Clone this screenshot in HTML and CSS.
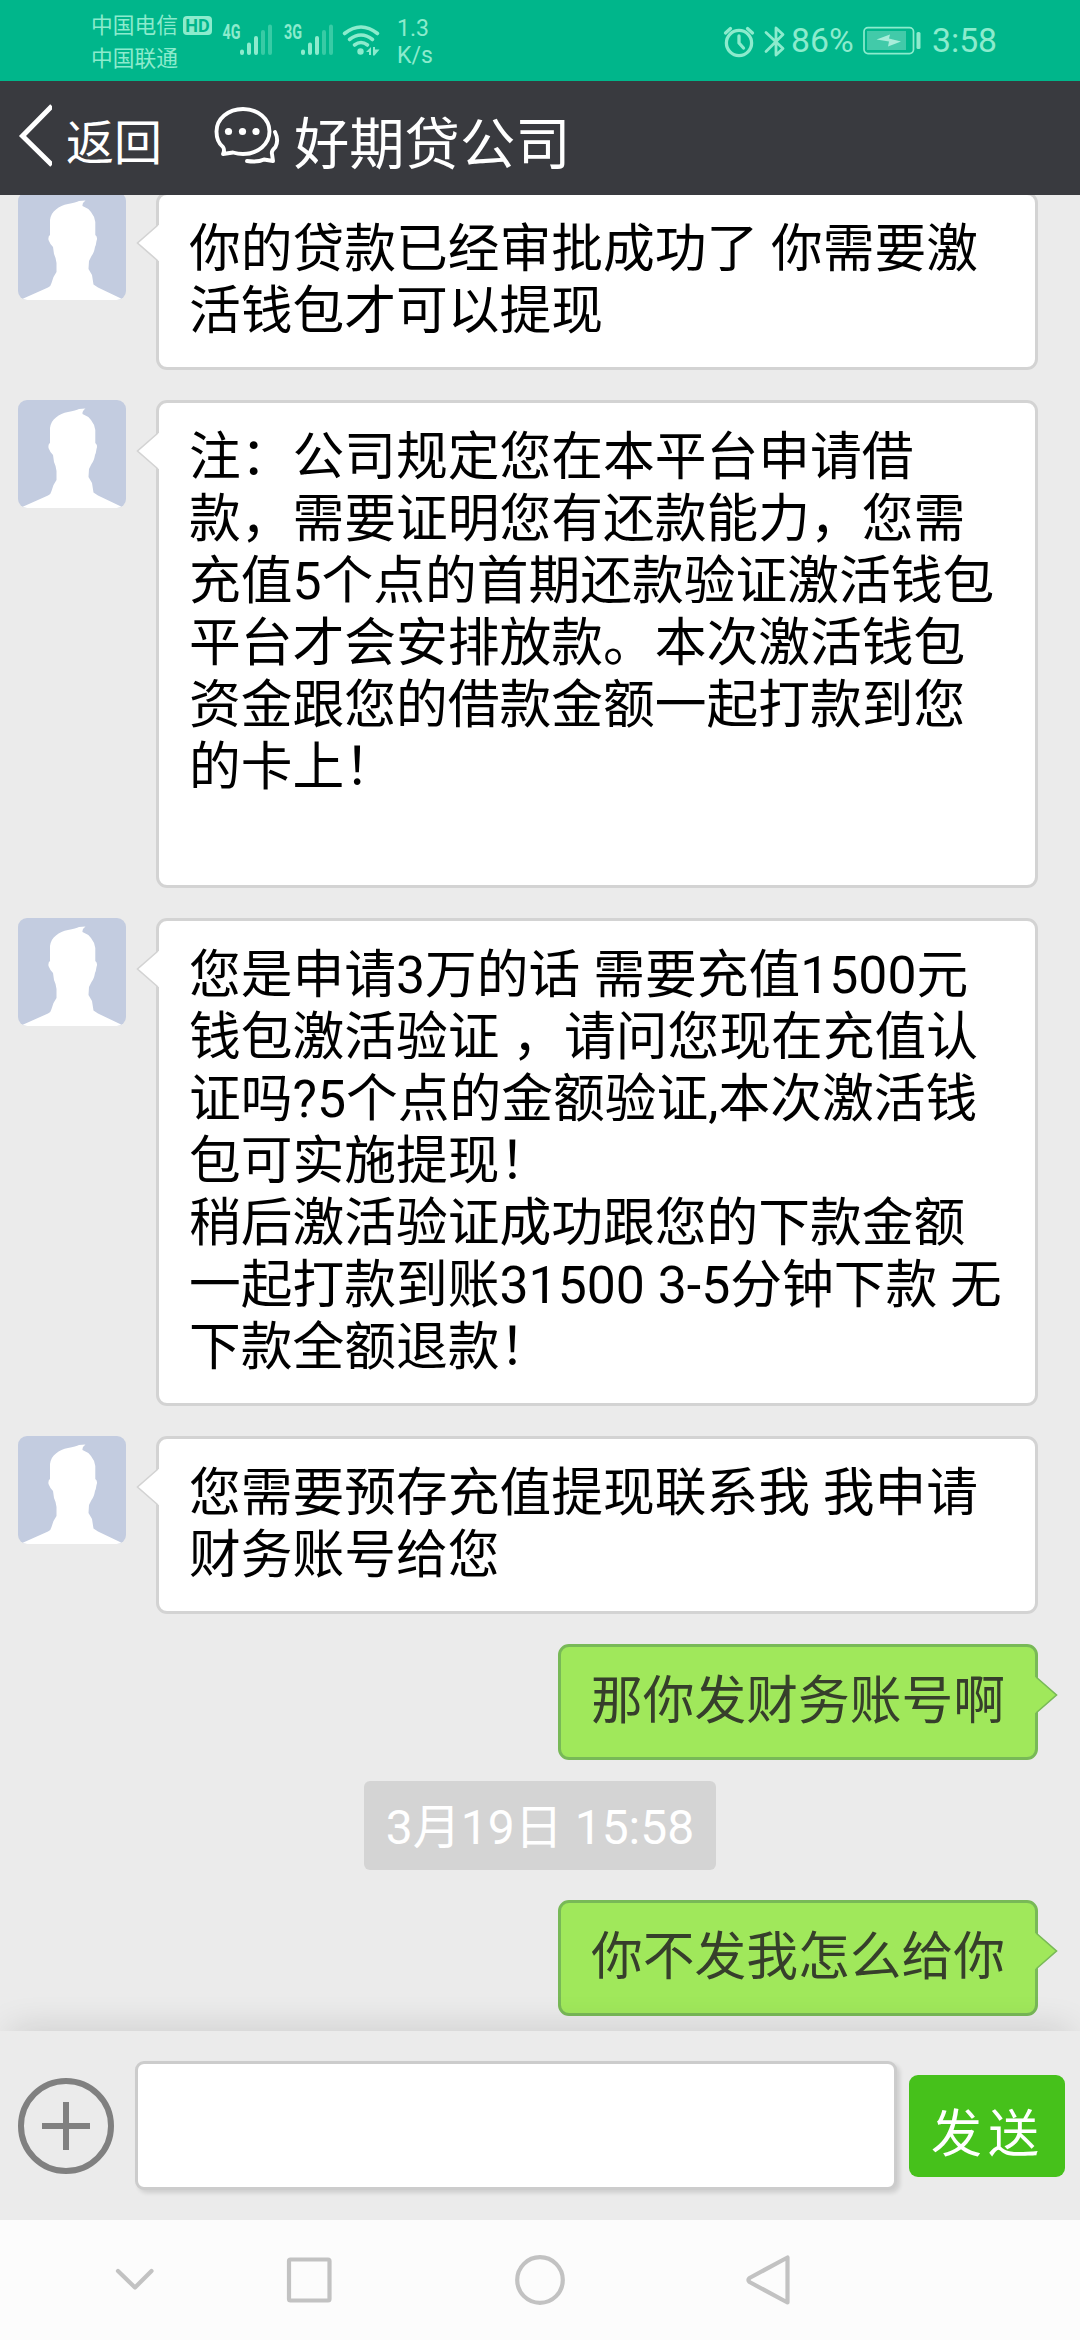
FILE: index.html
```html
<!DOCTYPE html>
<html lang="zh-CN">
<head>
<meta charset="utf-8">
<title>好期贷公司</title>
<link rel="stylesheet" href="styles.css">
</head>
<body>
<svg class="defs" aria-hidden="true">
  <symbol id="person" viewBox="0 0 108 108">
    <path fill="#fff" d="M3 108L5.3 106.5L30 95.5Q33 94 33.5 91L35.500 85L38.500 80V71Q38 66 36 62L35 55Q32 52 30.500 48Q30 44 32 43V28Q33 21 38 17.500Q43 13 50 12Q58 10.500 61 9L67.500 8.500Q64 11 64.500 14Q70 16 73 20Q77 25 77.300 30V43Q80 45 78.500 49Q78 53 77 55Q76 61 73.500 64L71 69L70.500 77L74 83L75.500 92.500L80 95.500L102 106L105 108Z"/>
  </symbol>
  <symbol id="tail-left" viewBox="0 0 24 38">
    <path class="tail-fill" d="M24 1H22L1.500 19L22 37H24Z"/>
    <path class="tail-line" d="M22 1L1.500 19L22 37"/>
  </symbol>
</svg>
<div class="screen">
  <header class="status">
    <div class="carriers">
      <div class="carrier">中国电信<span class="hd">HD</span></div>
      <div class="carrier">中国联通</div>
    </div>
    <svg class="signals" viewBox="220 18 164 44" width="164" height="44">
      <g class="net"><text x="222.500" y="39" textLength="18" lengthAdjust="spacingAndGlyphs">4G</text><text x="284" y="39" textLength="18" lengthAdjust="spacingAndGlyphs">3G</text></g>
      <g class="bars"><path d="M242 51.500V53M249 44.500V53M256 38V53M303 51.500V53M310 44.500V53M317 38V53"/><path opacity=".4" d="M263 32V53M270 26.500V53M324 32V53M331 26.500V53"/></g>
      <g class="wifi"><path d="M344.500 33.500Q361 20.500 377.500 33.500M349.500 39.500Q361 30.500 372.500 39.500M354.500 45Q361 40 367.500 45"/></g>
      <g fill="#8cebcd"><circle cx="360.500" cy="51.500" r="3.200"/><path d="M366 52L371 47V55H369V52ZM373 47H375V49.500H379.500L374.500 55.500H373Z"/></g>
    </svg>
    <div class="speed"><span>1.3</span><span>K/s</span></div>
    <div class="status-right">
      <svg class="line-icon" width="32" height="34" viewBox="0 0 32 34" stroke-width="3.300"><circle cx="16" cy="19" r="12.600"/><path d="M2.500 9L7.500 4.500M24.500 4.500L29.500 9M16 12V19L20.500 24"/></svg>
      <svg class="line-icon bt" width="22" height="34" viewBox="0 0 22 34" stroke-width="2.800"><path d="M2 8.500L19 24.500L12 31V4L19 10.500L2 27.500"/></svg>
      <span class="pct">86%</span>
      <svg class="battery" width="60" height="30" viewBox="0 0 60 30"><rect x="1" y="1.600" width="49.500" height="26" rx="4" fill="none" stroke="#8cebcd" stroke-width="1.700"/><rect x="4" y="5" width="39" height="19" fill="#42caa9"/><path d="M13.500 13.500L27 8.500L26 12.500L38 15.500L25 20.500L26 15.500Z" fill="#a8edda"/><rect x="53.500" y="6" width="4" height="17" rx="1.500" fill="#8cebcd"/></svg>
      <span class="clock">3:58</span>
    </div>
  </header>
  <nav class="topbar">
    <svg class="back" width="34" height="64" viewBox="18 103 34 64"><path d="M52 106L22.500 136L52 165" fill="none" stroke="#fff" stroke-width="5"/></svg>
    <span class="back-label">返回</span>
    <svg class="chat-icon" width="68" height="60" viewBox="212 105 68 60"><g fill="none" stroke="#fff" stroke-width="3.900" stroke-linejoin="round" stroke-linecap="round"><path d="M222 154Q224 150 222 147C217 143 215.500 137 215.500 131.500C215.500 119 227 109 242 109S268.500 119 268.500 131.500S257 154 242 154Q237 154 232 152.500Z"/><path d="M274 132Q278 140 274.500 147Q270 151 271 154L272 161L263 159.500Q257 162.500 246 161"/></g><g fill="#fff"><circle cx="227.500" cy="131.500" r="3.600"/><circle cx="241.500" cy="131.500" r="3.600"/><circle cx="255" cy="131.500" r="3.600"/></g></svg>
    <h1 class="title">好期贷公司</h1>
  </nav>
  <main class="chat">
    <div class="row"><svg class="avatar"><use href="#person"/></svg>
      <div class="bubble">你的贷款已经审批成功了 你需要激<br>活钱包才可以提现<svg class="tail"><use href="#tail-left"/></svg></div></div>
    <div class="row"><svg class="avatar"><use href="#person"/></svg>
      <div class="bubble">注：公司规定您在本平台申请借<br>款，需要证明您有还款能力，您需<br>充值5个点的首期还款验证激活钱包<br>平台才会安排放款。本次激活钱包<br>资金跟您的借款金额一起打款到您<br>的卡上！<br>&nbsp;<svg class="tail"><use href="#tail-left"/></svg></div></div>
    <div class="row"><svg class="avatar"><use href="#person"/></svg>
      <div class="bubble">您是申请3万的话 需要充值1500元<br>钱包激活验证 ，请问您现在充值认<br>证吗?5个点的金额验证,本次激活钱<br>包可实施提现！<br>稍后激活验证成功跟您的下款金额<br>一起打款到账31500 3-5分钟下款 无<br>下款全额退款！<svg class="tail"><use href="#tail-left"/></svg></div></div>
    <div class="row"><svg class="avatar"><use href="#person"/></svg>
      <div class="bubble">您需要预存充值提现联系我 我申请<br>财务账号给您<svg class="tail"><use href="#tail-left"/></svg></div></div>
    <div class="row mine"><div class="bubble">那你发财务账号啊<svg class="tail"><use href="#tail-left"/></svg></div></div>
    <time class="stamp">3月19日 15:58</time>
    <div class="row mine"><div class="bubble">你不发我怎么给你<svg class="tail"><use href="#tail-left"/></svg></div></div>
    <div class="fade"></div>
  </main>
  <footer class="composer">
    <svg width="96" height="96" viewBox="0 0 96 96" fill="none" stroke="#808080" stroke-width="6"><circle cx="48" cy="48" r="45"/><path d="M24 48H72M48 24V72"/></svg>
    <div class="input"></div>
    <button class="send">发送</button>
  </footer>
  <div class="sysnav">
    <svg width="1080" height="120" viewBox="0 0 1080 120" fill="none" stroke="#c2c2c2" stroke-width="4.200" stroke-linecap="round" stroke-linejoin="round"><path d="M118 51L135 67.500L151.500 51"/><rect x="289" y="39.500" width="40.500" height="41" rx="1.500"/><circle cx="540" cy="60" r="22.800"/><path d="M787.500 37.500V82.500L749.500 62Q747.500 60 749.500 58Z"/></svg>
  </div>
</div>
</body>
</html>
```
FILE: styles.css
```css
* { box-sizing: border-box; }
body { margin: 0; font-family: Roboto, "Noto Sans CJK SC", sans-serif; text-spacing-trim: space-all; }
.defs { position: absolute; width: 0; height: 0; }
.screen { width: 1080px; height: 2340px; display: flex; flex-direction: column; overflow: hidden; background: #ebebeb; }

.status { height: 81px; flex: none; display: flex; align-items: flex-start; background: #00b68b; color: #8cebcd; padding-left: 91px; }
.carriers { width: 129px; padding-top: 9px; font-size: 21.750px; line-height: 33px; }
.carrier { display: flex; align-items: center; white-space: nowrap; }
.hd { margin-left: 5px; width: 29px; height: 19px; border-radius: 4px; background: #8cebcd; color: #00b68b; font-size: 18px; font-weight: 700; line-height: 20px; text-align: center; }
.signals { margin-top: 18px; }
.net { font: 700 19.500px Roboto, sans-serif; fill: #8cebcd; }
.bars { fill: none; stroke: #8cebcd; stroke-width: 4; stroke-linecap: round; }
.wifi { fill: none; stroke: #8cebcd; stroke-width: 3.600; stroke-linecap: round; }
.speed { margin-left: 13px; padding-top: 15px; width: 60px; display: flex; flex-direction: column; font-size: 23px; line-height: 27px; }
.status-right { margin-left: 266px; display: flex; align-items: center; height: 81px; font-size: 33.750px; }
.line-icon { fill: none; stroke: #8cebcd; stroke-linecap: round; stroke-linejoin: round; }
.bt { margin-left: 9px; }
.pct { margin-left: 5px; width: 72px; }
.clock { margin-left: 9px; }

.topbar { height: 114px; flex: none; display: flex; align-items: center; background: #393a3f; color: #fff; padding-left: 18px; white-space: nowrap; }
.back { margin-top: -6px; }
.back-label { margin-left: 14px; width: 96px; font-size: 48px; padding-top: 1px; }
.chat-icon { margin-left: 51px; margin-top: -6px; }
.title { margin: 0 0 0 13px; font-size: 55.300px; font-weight: 400; padding-top: 4px; }

.chat { height: 1839px; flex: none; display: flex; flex-direction: column; overflow: hidden; position: relative; margin-top: -3px; clip-path: inset(3px 0 0); }
.row { display: flex; align-items: flex-start; gap: 30px; padding: 0 42px 0 18px; margin-bottom: 30px; }
.avatar { width: 108px; height: 108px; flex: none; border-radius: 9px; background: #c3cce0; }
.bubble { position: relative; width: 882px; padding: 24px 30px; border: 3px solid #d3d3d3; border-radius: 11px; background: #fff; color: #000; font-size: 51.750px; line-height: 62px; white-space: nowrap; --fill: #fff; --edge: #d3d3d3; }
.mine { justify-content: flex-end; }
.mine .bubble { width: 480px; background: #a0e85b; border-color: #78b957; color: #363f2b; --fill: #a0e85b; --edge: #78b957; }
.tail { position: absolute; left: -23px; top: 29px; width: 24px; height: 38px; }
.tail-fill { fill: var(--fill); }
.tail-line { fill: none; stroke: var(--edge); stroke-width: 1.600; }
.mine .tail { left: auto; right: -23px; transform: scaleX(-1); }
.stamp { align-self: center; margin: -9px 0 30px; width: 352px; height: 89px; border-radius: 6px; background: #d4d4d4; color: #fff; font-size: 48px; line-height: 94px; text-align: center; }
.fade { position: absolute; left: 10px; right: 10px; bottom: -30px; height: 30px; box-shadow: 0 0 36px rgba(0,0,0,.16); }

.composer { height: 189px; flex: none; display: flex; align-items: center; padding: 0 15px 0 18px; background: #ebebeb; }
.input { margin-left: 21px; width: 762px; height: 129px; border: 3px solid #ccc; border-radius: 9px; background: #fff; box-shadow: 3px 3px 4px rgba(0,0,0,.12); }
.send { margin-left: 12px; width: 156px; height: 102px; border: 0; border-radius: 9px; padding: 9px 0 0; background: #46c11b; color: #fff; font: 51px Roboto, "Noto Sans CJK SC", sans-serif; letter-spacing: 6px; text-indent: 2px; white-space: nowrap; }
.sysnav { height: 120px; flex: none; background: #fcfcfc; }
.sysnav svg { display: block; }
```
